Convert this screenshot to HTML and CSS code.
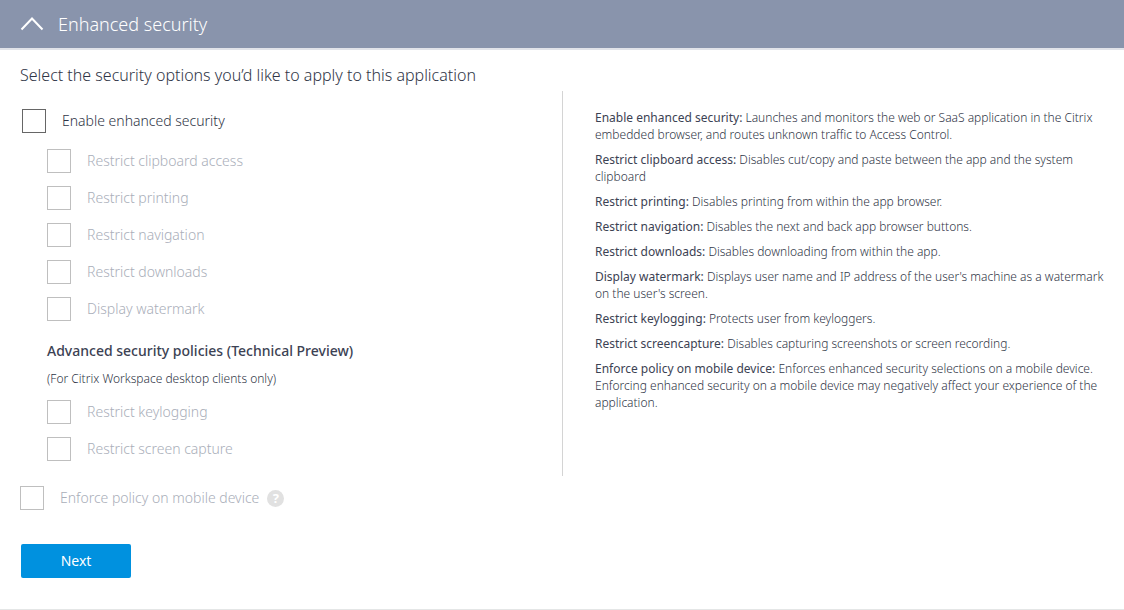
FILE: index.html
```html
<!DOCTYPE html>
<html lang="en">
<head>
<meta charset="utf-8">
<meta name="viewport" content="width=device-width, initial-scale=1">
<title>Enhanced security</title>
<link rel="stylesheet" href="styles.css">
</head>
<body>
<main class="panel">
  <header class="panel-header">
    <button class="toggle" type="button" aria-expanded="true" aria-label="Collapse section">
      <svg width="24" height="14" viewBox="0 0 24 14" fill="none" stroke="#fff" stroke-width="2"><path d="M1.500 12.500 12 1.500l10.500 11"/></svg>
    </button>
    <h1 class="title">Enhanced security</h1>
  </header>
  <form class="content">
    <p class="intro">Select the security options you’d like to apply to this application</p>
    <div class="columns">
      <section class="options">
        <label class="option option-main"><input class="box" type="checkbox">Enable enhanced security</label>
        <div class="group">
          <label class="option"><input class="box" type="checkbox" disabled>Restrict clipboard access</label>
          <label class="option"><input class="box" type="checkbox" disabled>Restrict printing</label>
          <label class="option"><input class="box" type="checkbox" disabled>Restrict navigation</label>
          <label class="option"><input class="box" type="checkbox" disabled>Restrict downloads</label>
          <label class="option"><input class="box" type="checkbox" disabled>Display watermark</label>
        </div>
        <h2 class="subtitle">Advanced security policies (Technical Preview)</h2>
        <p class="note">(For Citrix Workspace desktop clients only)</p>
        <div class="group">
          <label class="option"><input class="box" type="checkbox" disabled>Restrict keylogging</label>
          <label class="option"><input class="box" type="checkbox" disabled>Restrict screen capture</label>
        </div>
      </section>
      <section class="help">
        <p><strong>Enable enhanced security:</strong> Launches and monitors the web or SaaS application in the Citrix embedded browser, and routes unknown traffic to Access Control.</p>
        <p><strong>Restrict clipboard access:</strong> Disables cut/copy and paste between the app and the system clipboard</p>
        <p><strong>Restrict printing:</strong> Disables printing from within the app browser.</p>
        <p><strong>Restrict navigation:</strong> Disables the next and back app browser buttons.</p>
        <p><strong>Restrict downloads:</strong> Disables downloading from within the app.</p>
        <p><strong>Display watermark:</strong> Displays user name and IP address of the user's machine as a watermark on the user's screen.</p>
        <p><strong>Restrict keylogging:</strong> Protects user from keyloggers.</p>
        <p><strong>Restrict screencapture:</strong> Disables capturing screenshots or screen recording.</p>
        <p><strong>Enforce policy on mobile device:</strong> Enforces enhanced security selections on a mobile device. Enforcing enhanced security on a mobile device may negatively affect your experience of the application.</p>
      </section>
    </div>
    <div class="mobile">
      <label class="option"><input class="box" type="checkbox" disabled>Enforce policy on mobile device</label>
      <button class="hint" type="button" aria-label="About mobile policy">?</button>
    </div>
    <button class="next" type="button">Next</button>
  </form>
</main>
</body>
</html>
```
FILE: styles.css
```css
* {
  box-sizing: border-box;
}

body {
  margin: 0;
  background: #fff;
  color: #2f3546;
  font-family: "Noto Sans", "Open Sans", sans-serif;
  font-size: 14px;
  font-weight: 300;
  line-height: 24px;
}

h1, h2, p {
  margin: 0;
}

button {
  border: 0;
  padding: 0;
  font-family: inherit;
}

.panel {
  border-bottom: 1px solid #e4e6e6;
}

.panel-header {
  display: flex;
  align-items: center;
  gap: 14px;
  height: 50px;
  padding: 0 20px;
  background: #8994ac;
  border-bottom: 2px solid #e1e3e9;
}

.toggle {
  display: flex;
  background: none;
}

.title {
  color: #fff;
  font-size: 18px;
  font-weight: 300;
}

.content {
  padding: 13px 20px 31px;
}

.intro {
  font-size: 16px;
}

.columns {
  display: grid;
  grid-template-columns: 1fr 1fr;
  margin-top: 4px;
}

.options {
  padding: 18px 0 15px;
}

.option {
  display: flex;
  align-items: center;
  gap: 16px;
}

.option-main {
  padding-left: 2px;
}

.option:has(:disabled) {
  color: #a9aeb9;
}

.box {
  appearance: none;
  flex: none;
  width: 24px;
  height: 24px;
  margin: 0;
  border: 1px solid #666;
  background: #fff;
}

.box:checked {
  background: #0091df;
}

.box:disabled {
  border-color: #bfbfbf;
}

.group {
  display: grid;
  gap: 13px;
  padding-left: 27px;
}

.option-main + .group {
  margin-top: 16px;
}

.subtitle {
  margin: 18px 0 4px;
  padding-left: 27px;
  color: #3c4253;
  font-size: 14px;
  font-weight: 500;
}

.note {
  margin-bottom: 9px;
  padding-left: 27px;
  font-size: 12px;
}

.help {
  display: grid;
  align-content: start;
  gap: 8px;
  padding: 18px 0 14px 32px;
  border-left: 1px solid #d4d4d4;
  font-size: 12px;
  line-height: 17px;
}

.help strong {
  color: #3c4253;
  font-weight: 400;
}

.mobile {
  display: flex;
  align-items: center;
  gap: 8px;
  margin-top: 10px;
}

.hint {
  width: 17px;
  height: 17px;
  border-radius: 50%;
  background: #e1e1e1;
  color: #fff;
  font-size: 13px;
  font-weight: 700;
  line-height: 17px;
}

.next {
  width: 110px;
  height: 34px;
  margin: 34px 0 0 1px;
  padding-bottom: 2px;
  border-radius: 2px;
  background: #0091df;
  color: #fff;
  font-size: 14px;
}
```
